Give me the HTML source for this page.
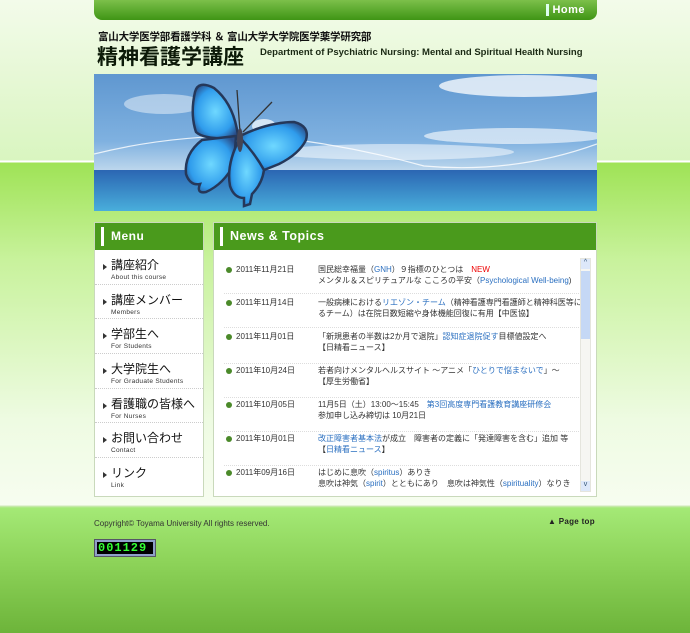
<!DOCTYPE html>
<html><head><meta charset="utf-8"><style>
*{margin:0;padding:0;box-sizing:border-box}
body{width:690px;height:633px;overflow:hidden;font-family:"Liberation Sans","Noto Sans CJK JP",sans-serif;position:relative;
background:linear-gradient(#f3fbea 0,#d9f5c0 160px,#fff 161px,#fff 162px,#9fe356 163px,#c8f29c 260px,#eefbe2 420px,#f7fdf0 505px,#cfe9b8 506px,#a4e976 508px,#8ed45a 560px,#6db43a 633px)}
.abs{position:absolute}
.hbar{left:94px;top:0;width:503px;height:20px;border-radius:0 0 8px 8px;background:linear-gradient(#7cc04a,#3f9515);color:#fff;font-weight:bold;font-size:11px}
.hbar span{position:absolute;right:12px;top:4px;letter-spacing:.5px}
.hbar i{position:absolute;right:48px;top:4px;width:3px;height:12px;background:#dfe}
.sub{left:98px;top:29px;font-size:10.5px;font-weight:bold;color:#111;letter-spacing:-.2px}
.big{left:97px;top:41px;font-size:21px;font-weight:bold;color:#0c1a08;letter-spacing:0;white-space:nowrap}
.eng{left:260px;top:47px;font-size:9.5px;font-weight:bold;color:#1b2a14}
.box{background:#fff;border:1px solid #c9d9bb}
.gh{height:27px;background:#4a9a1c;color:#fff;font-weight:bold;font-size:12px;padding:6px 0 0 16px;position:relative;letter-spacing:.5px}
.gh:before{content:"";position:absolute;left:6px;top:4px;width:3px;height:19px;background:#fff}
.mi{height:34.7px;border-bottom:1px dotted #ccc;padding:9px 0 0 16px;position:relative}
.mi:before{content:"";position:absolute;left:8px;top:14px;border-left:4px solid #333;border-top:3px solid transparent;border-bottom:3px solid transparent}
.mi b{display:block;font-size:12px;font-weight:normal;color:#111;line-height:13px}
.mi small{display:block;font-size:6.5px;color:#333;margin-top:2px;letter-spacing:.3px}
.row{position:absolute;left:10px;width:355px;border-bottom:1px dotted #ddd;font-size:8px;color:#333;line-height:11px}
.row .d{position:absolute;left:12px;top:0}
.row .d:before{content:"";position:absolute;left:-10px;top:3px;width:6px;height:6px;border-radius:50%;background:#4b8a2a}
.row .t{position:absolute;left:94px;top:0;width:272px}
a{color:#2a6fc0;text-decoration:none}
.sb{left:580px;top:258px;width:11px;height:234px;background:#f6f6f2;border:1px solid #e5e5dd}
</style></head><body>
<div class="abs hbar"><i></i><span>Home</span></div>
<div class="abs sub">富山大学医学部看護学科 ＆ 富山大学大学院医学薬学研究部</div>
<div class="abs big">精神看護学講座</div>
<div class="abs eng">Department of Psychiatric Nursing: Mental and Spiritual Health Nursing</div>
<svg class="abs" style="left:94px;top:74px" width="503" height="137" viewBox="0 0 503 137">
<defs><linearGradient id="sky" x1="0" y1="0" x2="0" y2="1"><stop offset="0" stop-color="#5f97d0"/><stop offset=".7" stop-color="#7fb1e0"/><stop offset="1" stop-color="#bcd6ec"/></linearGradient>
<linearGradient id="sea" x1="0" y1="0" x2="0" y2="1"><stop offset="0" stop-color="#2b66b2"/><stop offset="1" stop-color="#49aedb"/></linearGradient>
<radialGradient id="w" cx=".5" cy=".5" r=".6"><stop offset="0" stop-color="#6fd8ff"/><stop offset=".7" stop-color="#2f9cec"/><stop offset="1" stop-color="#2a4f8a"/></radialGradient></defs>
<rect width="503" height="96" fill="url(#sky)"/>
<rect y="96" width="503" height="41" fill="url(#sea)"/>
<ellipse cx="430" cy="12" rx="85" ry="11" fill="#fff" opacity=".75"/>
<ellipse cx="420" cy="62" rx="90" ry="8" fill="#fff" opacity=".6"/>
<ellipse cx="300" cy="78" rx="120" ry="8" fill="#fff" opacity=".5"/>
<ellipse cx="70" cy="30" rx="40" ry="10" fill="#fff" opacity=".45"/>
<ellipse cx="170" cy="52" rx="12" ry="7" fill="#fff" opacity=".7"/>
<path d="M0 80 Q80 60 170 62 Q250 70 330 92 Q420 100 503 70" stroke="#fff" stroke-width="1.2" fill="none" opacity=".8"/>
<g stroke="#25385a" stroke-width="2.5" fill="url(#w)">
<path d="M144 62 Q140 30 120 14 Q104 6 101 18 Q96 40 102 58 Q110 66 144 64 Z"/>
<path d="M146 62 Q175 48 200 48 Q216 52 212 66 Q205 80 185 90 L170 96 Q155 80 146 62 Z"/>
<path d="M142 62 L108 66 Q90 80 92 100 Q96 112 106 110 Q102 120 112 118 Q130 110 140 90 Z"/>
<path d="M146 64 Q132 90 136 112 Q140 124 150 124 L150 132 L156 130 L158 120 Q168 110 170 96 Q160 78 146 64 Z"/>
</g>
<path d="M146 58 L143 16 M149 58 L178 28" stroke="#333" stroke-width="1.3" fill="none"/>
<ellipse cx="146" cy="66" rx="3" ry="12" fill="#445"/>
</svg>
<div class="abs box" style="left:94px;top:222px;width:110px;height:275px">
<div class="gh">Menu</div>
<div class="mi"><b>講座紹介</b><small>About this course</small></div>
<div class="mi"><b>講座メンバー</b><small>Members</small></div>
<div class="mi"><b>学部生へ</b><small>For Students</small></div>
<div class="mi"><b>大学院生へ</b><small>For Graduate Students</small></div>
<div class="mi"><b>看護職の皆様へ</b><small>For Nurses</small></div>
<div class="mi"><b>お問い合わせ</b><small>Contact</small></div>
<div class="mi" style="border:0"><b>リンク</b><small>Link</small></div>
</div>
<div class="abs box" style="left:213px;top:222px;width:384px;height:275px">
<div class="gh" style="font-size:12.5px">News &amp; Topics</div>
<div class="row" style="top:41px;height:30px"><span class="d">2011年11月21日</span><span class="t">国民総幸福量（<a>GNH</a>）９指標のひとつは　<span style="color:#e00">NEW</span><br>メンタル＆スピリチュアルな こころの平安（<a>Psychological Well-being</a>)</span></div>
<div class="row" style="top:74px;height:31px"><span class="d">2011年11月14日</span><span class="t">一般病棟における<a>リエゾン・チーム</a>（精神看護専門看護師と精神科医等によるチーム）は在院日数短縮や身体機能回復に有用【中医協】</span></div>
<div class="row" style="top:108px;height:33px"><span class="d">2011年11月01日</span><span class="t">「新規患者の半数は2か月で退院」<a>認知症退院促す</a>目標値設定へ<br>【日精看ニュース】</span></div>
<div class="row" style="top:142px;height:33px"><span class="d">2011年10月24日</span><span class="t">若者向けメンタルヘルスサイト ～アニメ「<a>ひとりで悩まないで</a>」～<br>【厚生労働省】</span></div>
<div class="row" style="top:176px;height:33px"><span class="d">2011年10月05日</span><span class="t">11月5日（土）13:00～15:45　<a>第3回高度専門看護教育講座研修会</a><br>参加申し込み締切は 10月21日</span></div>
<div class="row" style="top:210px;height:33px"><span class="d">2011年10月01日</span><span class="t"><a>改正障害者基本法</a>が成立　障害者の定義に「発達障害を含む」追加 等<br>【<a>日精看ニュース</a>】</span></div>
<div class="row" style="top:244px;height:30px;border:0"><span class="d">2011年09月16日</span><span class="t">はじめに息吹（<a>spiritus</a>）ありき<br>息吹は神気（<a>spirit</a>）とともにあり　息吹は神気性（<a>spirituality</a>）なりき</span></div>
</div>
<div class="abs sb"><div style="margin:12px 0 0 0;height:68px;background:#c5d8f5"></div><div style="position:absolute;left:0;top:0;width:9px;height:10px;background:#dde8fa;font-size:7px;color:#357;text-align:center">^</div><div style="position:absolute;left:0;bottom:0;width:9px;height:10px;background:#dde8fa;font-size:7px;color:#357;text-align:center">v</div></div>
<div class="abs" style="left:94px;top:519px;font-size:8px;color:#333">Copyright© Toyama University All rights reserved.</div>
<div class="abs" style="left:548px;top:517px;font-size:8px;font-weight:bold;color:#222;letter-spacing:.3px">▲ Page top</div>
<div class="abs" style="left:94px;top:539px;width:62px;height:18px;background:#8fa0c8;border:1px solid #556;padding:2px"><div style="background:#000;height:12px;color:#3f3;font-family:'Liberation Mono',monospace;font-weight:bold;font-size:12px;line-height:12px;letter-spacing:1px;padding-left:1px">001129</div></div>
</body></html>
